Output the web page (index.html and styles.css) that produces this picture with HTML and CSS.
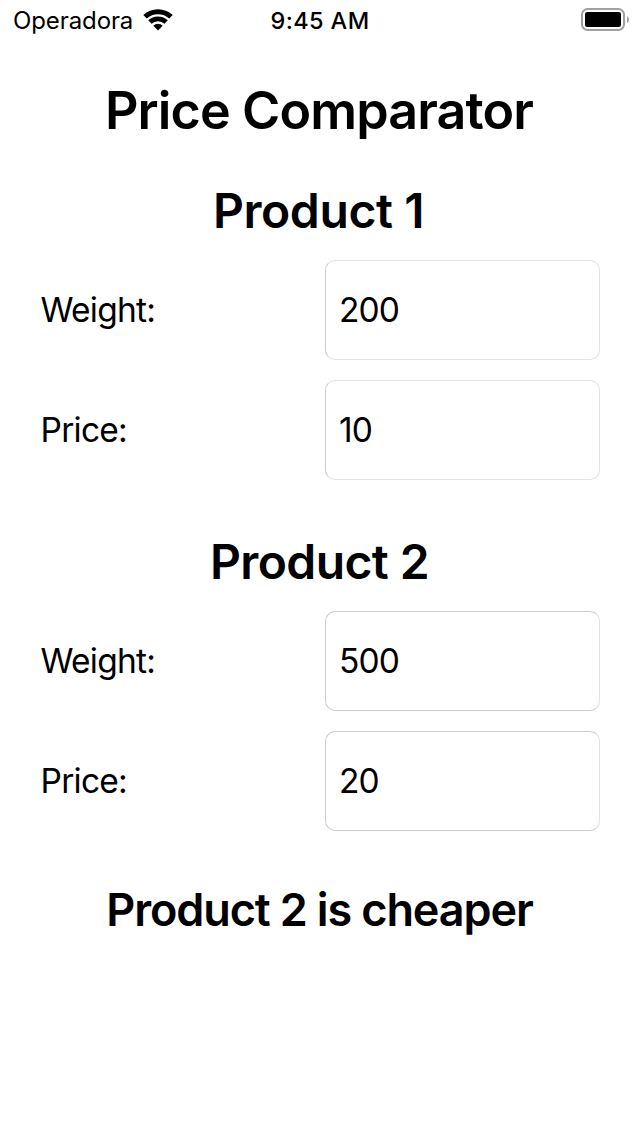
FILE: index.html
```html
<!DOCTYPE html>
<html lang="en">
<head>
<meta charset="utf-8">
<title>Price Comparator</title>
<link rel="stylesheet" href="styles.css">
</head>
<body>
<header class="status">
  <div class="carrier"><span class="carrier-name">Operadora</span>
    <svg class="wifi" viewBox="0 0 30 22" width="30" height="22"><path d="M0.300 6a21.500 21.500 0 0 1 29.400 0l-3.500 3.600a16.400 16.400 0 0 0-22.400 0z"/><path d="M5.200 11.300a14.300 14.300 0 0 1 19.600 0l-3.400 3.500a9.300 9.300 0 0 0-12.800 0z"/><path d="M10.300 16.700a6.800 6.800 0 0 1 9.400 0l-4.700 4.900z"/></svg>
  </div>
  <span class="clock">9:45 AM</span>
  <svg class="battery" viewBox="0 0 50 24" width="50" height="24"><rect x="2" y="1" width="42" height="21" rx="5.500" fill="none" stroke="#a0a0a0" stroke-width="2"/><rect x="5" y="4" width="36" height="15" rx="2.500"/><path d="M47 8q2 1 2 3.500t-2 3.500z" fill="#a0a0a0"/></svg>
</header>
<main class="app">
  <h1 class="title">Price Comparator</h1>
  <section class="product">
    <h2 class="heading first">Product 1</h2>
    <label class="row"><span class="label">Weight:</span><span class="field"><span class="value">200</span></span></label>
    <label class="row"><span class="label">Price:</span><span class="field"><span class="value">10</span></span></label>
  </section>
  <section class="product">
    <h2 class="heading">Product 2</h2>
    <label class="row"><span class="label">Weight:</span><span class="field strong"><span class="value">500</span></span></label>
    <label class="row"><span class="label">Price:</span><span class="field strong"><span class="value">20</span></span></label>
  </section>
  <p class="result">Product 2 is cheaper</p>
</main>
</body>
</html>
```
FILE: styles.css
```css
* { box-sizing: border-box; }
body { margin: 0; width: 640px; height: 1136px; background: #fff; color: #000; font-family: Inter, sans-serif; overflow: hidden; }
.status { display: grid; grid-template-columns: 1fr auto 1fr; height: 40px; align-items: center; padding: 0 10px 0 13px; }
.carrier { display: flex; align-items: center; gap: 9.6px; }
.carrier-name { font-size: 24px; letter-spacing: -0.1px; }
.clock { font-size: 23.5px; font-weight: 500; letter-spacing: 0.4px; margin-right: 3px; }
.battery { justify-self: end; }
.title { margin: 0; height: 140px; line-height: 142px; padding-right: 2px; text-align: center; font-size: 52px; font-weight: 600; letter-spacing: -0.88px; }
.product { height: 351px; padding: 0 40px; }
.heading { margin: 0; height: 80px; line-height: 62px; padding-right: 1px; text-align: center; font-size: 48px; font-weight: 600; letter-spacing: -0.6px; }
.first { padding-right: 3px; letter-spacing: -0.4px; }
.row { display: grid; grid-template-columns: 285px 275px; height: 100px; align-items: center; margin-bottom: 20px; font-size: 33.5px; line-height: 40px; letter-spacing: -0.75px; }
.label { padding-left: 0.5px; }
.field { display: flex; align-items: center; height: 100px; padding-left: 13px; border: 1px solid #e2e2e2; border-left-color: #ccc; border-radius: 10px; }
.value { letter-spacing: -0.85px; }
.strong { border-color: #ccc #e2e2e2 #ccc #ccc; }
.result { margin: 0; line-height: 55px; padding-right: 1px; text-align: center; font-size: 45px; font-weight: 600; letter-spacing: -1.12px; }
```
